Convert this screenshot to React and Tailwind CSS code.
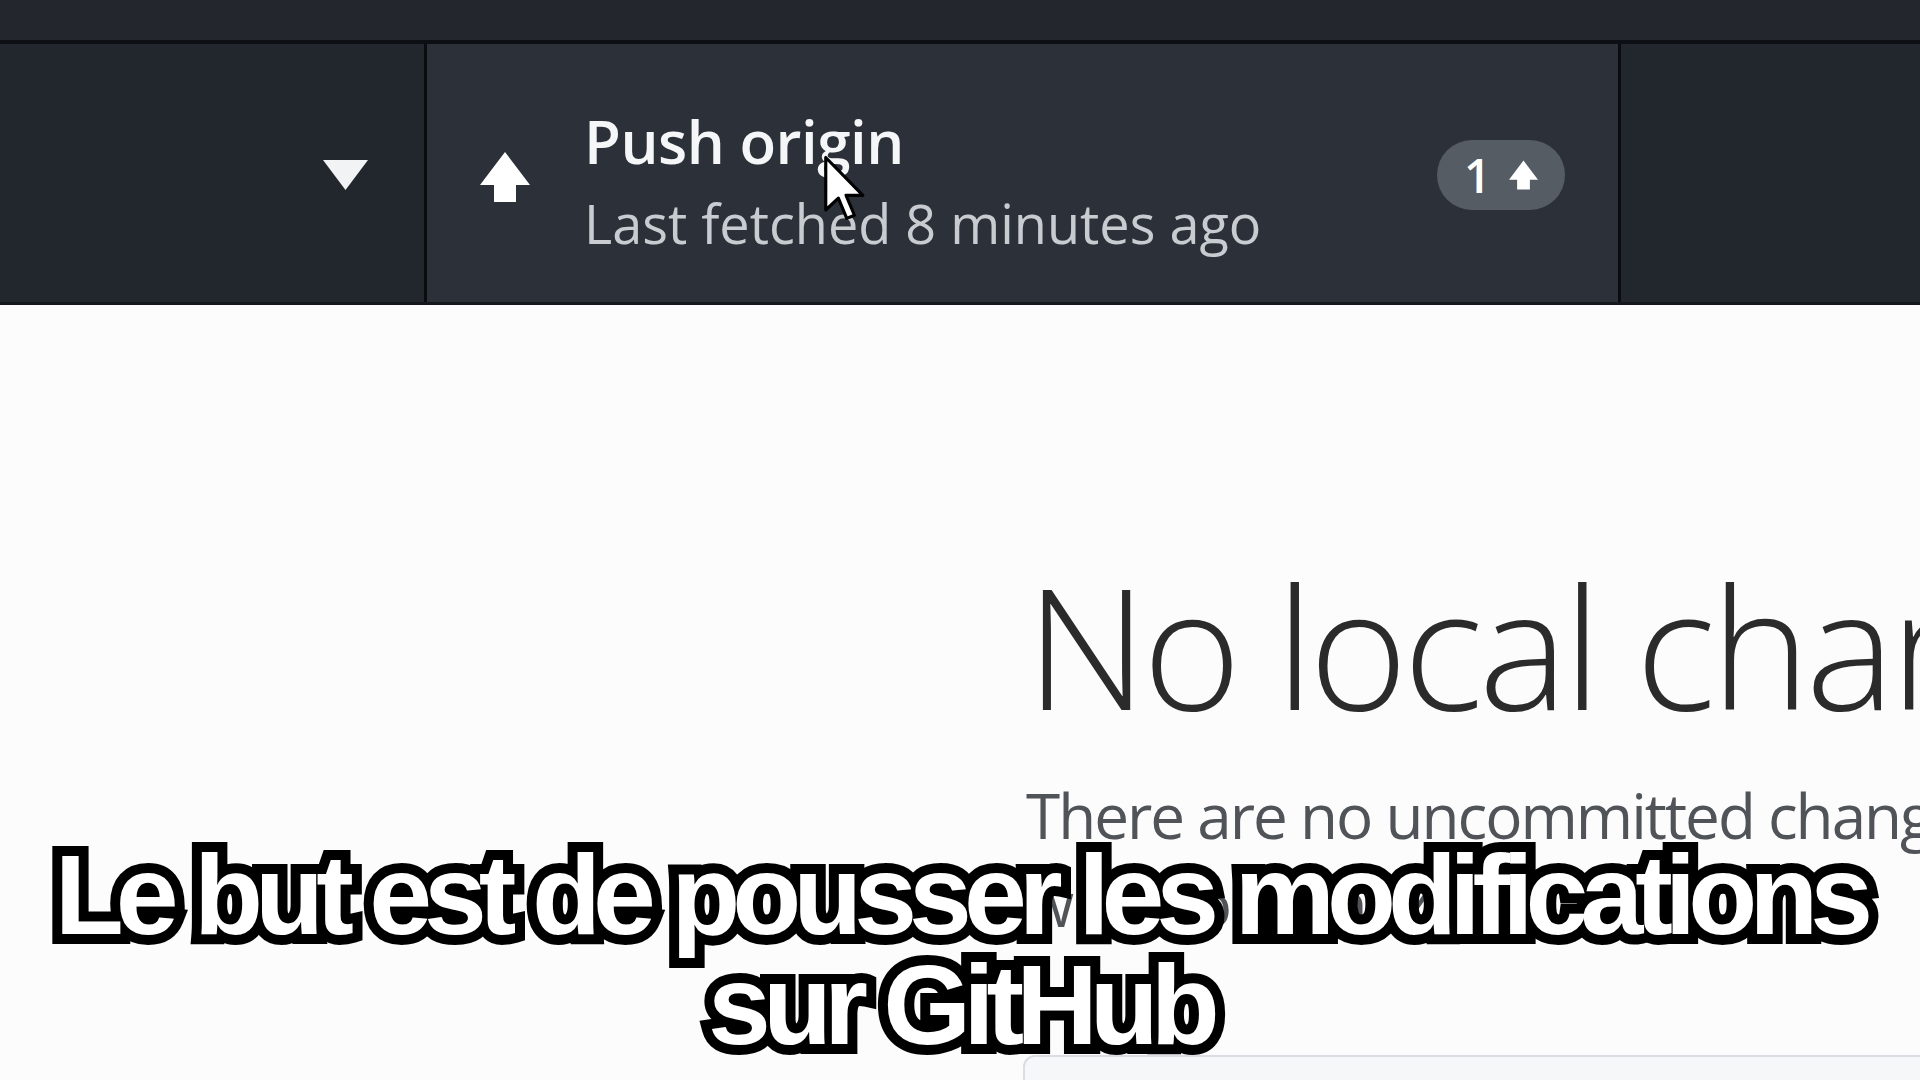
import React from "react";

function ArrowUp({ className }) {
  return (
    <svg viewBox="0 0 50 50" className={className} fill="currentColor">
      <polygon points="25,0 50,33 36,33 36,50 14,50 14,33 0,33" />
    </svg>
  );
}

function Cursor() {
  return (
    <svg
      viewBox="0 0 13 20"
      className="absolute left-[822px] top-[154px] w-[46px] h-[70px]"
    >
      <path
        d="M1 1 L1 16 L4.6 12.6 L7 18.4 L9.2 17.5 L6.8 11.8 L11.6 11.8 Z"
        fill="#fff"
        stroke="#000"
        strokeWidth="0.9"
        strokeLinejoin="round"
      />
    </svg>
  );
}

function Subtitle({ children }) {
  return (
    <div className="relative">
      <div className="text-black [-webkit-text-stroke:20px_#000]">{children}</div>
      <div className="absolute inset-0 text-white">{children}</div>
    </div>
  );
}

export default function App() {
  return (
    <div className="relative w-[1920px] h-[1080px] overflow-hidden bg-[#fcfcfd] font-['Open_Sans','Noto_Sans',sans-serif]">
      {/* title strip */}
      <div className="h-[40px] bg-[#23262d]" />
      <div className="h-[4px] bg-[#0c0f13]" />

      {/* toolbar */}
      <div className="flex h-[258px] bg-[#22262d]">
        <div className="w-[424px] flex items-center justify-end pr-[56px]">
          <svg viewBox="0 0 45 30" className="w-[45px] h-[30px] mt-[4px]">
            <polygon points="0,0 45,0 22.5,30" fill="#f2f3f4" />
          </svg>
        </div>
        <div className="w-[3px] bg-[#0a0c10]" />

        <div className="w-[1191px] flex items-start bg-[#2c3139] pl-[53px] pr-[53px]">
          <ArrowUp className="w-[50px] h-[50px] mt-[108px] text-white" />
          <div className="ml-[54px] mt-[57px] flex flex-col gap-[2px]">
            <div className="text-[60px] leading-[80px] font-semibold text-[#f5f6f7] tracking-[-0.5px]">
              Push origin
            </div>
            <div className="text-[54px] leading-[80px] text-[#c8ccd1]">
              Last fetched 8 minutes ago
            </div>
          </div>
          <div className="ml-auto mt-[96px] h-[70px] w-[128px] rounded-full bg-[#565c64] flex items-center justify-center gap-[18px]">
            <span className="text-[47px] leading-none font-semibold text-white">1</span>
            <ArrowUp className="w-[29px] h-[32px] text-white" />
          </div>
        </div>

        <div className="w-[3px] bg-[#0a0c10]" />
        <div className="flex-1 bg-[#22262d]" />
      </div>
      <div className="h-[3px] bg-[#15181c]" />

      {/* blank slate */}
      <div className="pl-[1023px] pt-[256px] whitespace-nowrap">
        <div className="pl-[3px] text-[168px] leading-[168px] font-light text-[#2b2b2b] tracking-[-4.5px]">
          No local changes
        </div>
        <div className="pl-[3px] mt-[42px] text-[62px] leading-[88px] text-[#505357] tracking-[-2px]">
          <div>There are no uncommitted changes in this repository. Here are</div>
          <div>what to do next.</div>
        </div>
        <div className="mt-[108px] h-[200px] w-[1100px] rounded-tl-xl border-2 border-[#dadde2] bg-[#f6f7f9]" />
      </div>

      <Cursor />

      {/* subtitles */}
      <div className="absolute left-0 right-0 top-[840px] flex flex-col items-center font-['Liberation_Sans',Arial,sans-serif] font-bold text-[113px] leading-[110px] tracking-[-8px] whitespace-nowrap">
        <Subtitle>Le but est de pousser les modifications</Subtitle>
        <Subtitle>sur GitHub</Subtitle>
      </div>
    </div>
  );
}
